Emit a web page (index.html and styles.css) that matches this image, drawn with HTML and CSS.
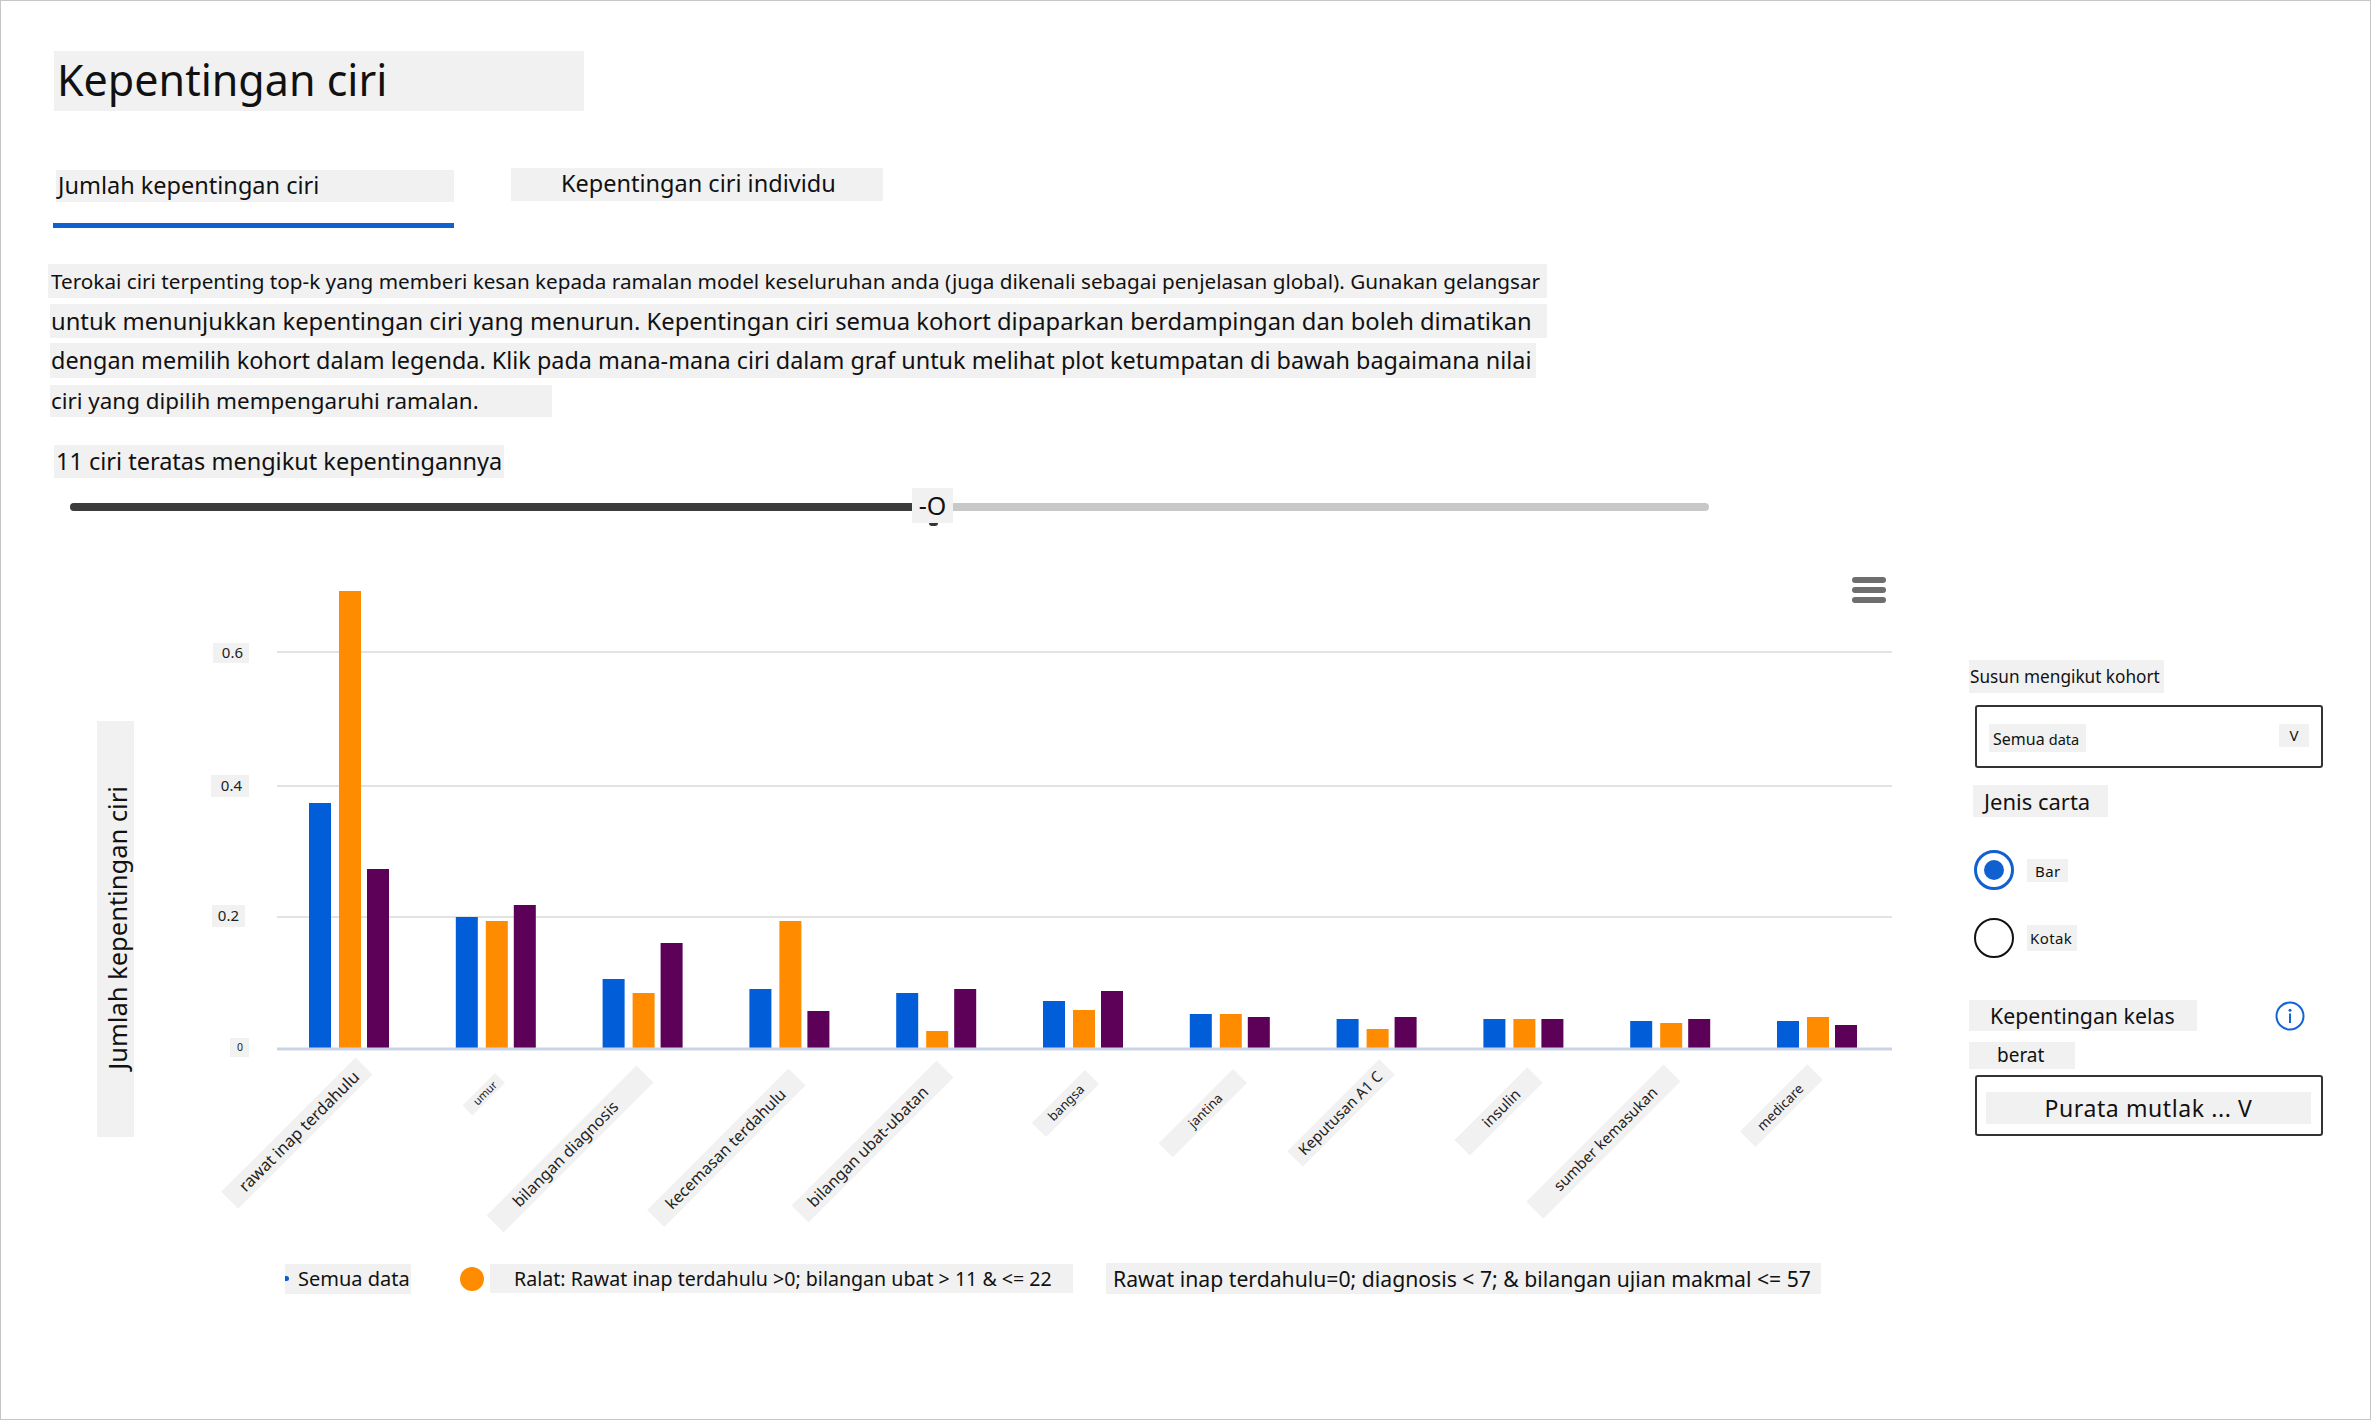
FILE: index.html
```html
<!DOCTYPE html>
<html lang="ms">
<head>
<meta charset="utf-8">
<title>Kepentingan ciri</title>
<link rel="stylesheet" href="styles.css">
</head>
<body>
<div class="page">
  <div class="title-box">Kepentingan ciri</div>

  <div class="tabs">
    <div class="tab tab-active">Jumlah kepentingan ciri</div>
    <div class="tab tab-other">Kepentingan ciri individu</div>
  </div>
  <div class="tab-underline"></div>

  <div class="desc">
    <span class="line line1">Terokai ciri terpenting top-k yang memberi kesan kepada ramalan model keseluruhan anda (juga dikenali sebagai penjelasan global). Gunakan gelangsar</span>
    <span class="line line2">untuk menunjukkan kepentingan ciri yang menurun. Kepentingan ciri semua kohort dipaparkan berdampingan dan boleh dimatikan</span>
    <span class="line line3">dengan memilih kohort dalam legenda. Klik pada mana-mana ciri dalam graf untuk melihat plot ketumpatan di bawah bagaimana nilai</span>
    <span class="line line4">ciri yang dipilih mempengaruhi ramalan.</span>
  </div>

  <div class="slider-label">11 ciri teratas mengikut kepentingannya</div>
  <div class="slider">
    <div class="slider-fill"></div>
    <div class="slider-thumb">-O</div>
    <span class="thumb-edge"></span>
  </div>

  <div class="chart-row">
    <div class="chart-col">
      <svg class="chart" width="1940" height="680" viewBox="1 560 1940 680" xmlns="http://www.w3.org/2000/svg">
        <!-- menu -->
        <rect x="1852" y="577" width="34" height="6" rx="3" fill="#6e6e6e"/>
        <rect x="1852" y="587" width="34" height="6" rx="3" fill="#6e6e6e"/>
        <rect x="1852" y="597" width="34" height="6" rx="3" fill="#6e6e6e"/>

        <!-- y title -->
        <rect x="97" y="721" width="37" height="416" fill="#f1f1f1"/>
        <text class="ytitle" transform="translate(117,928) rotate(-90)" text-anchor="middle" dominant-baseline="central">Jumlah kepentingan ciri</text>

        <!-- grid -->
        <line x1="277" y1="652" x2="1892" y2="652" stroke="#e3e3e3" stroke-width="2"/>
        <line x1="277" y1="786" x2="1892" y2="786" stroke="#e3e3e3" stroke-width="2"/>
        <line x1="277" y1="917" x2="1892" y2="917" stroke="#e3e3e3" stroke-width="2"/>

        <!-- ticks -->
        <rect x="213" y="643" width="36" height="20" fill="#f1f1f1"/>
        <text class="tick" x="243" y="658" text-anchor="end">0.6</text>
        <rect x="211" y="775" width="38" height="22" fill="#f1f1f1"/>
        <text class="tick" x="242" y="791" text-anchor="end">0.4</text>
        <rect x="212" y="905" width="33" height="22" fill="#f1f1f1"/>
        <text class="tick" x="239" y="921" text-anchor="end">0.2</text>
        <rect x="230" y="1038" width="19" height="19" fill="#f1f1f1"/>
        <text class="tick0" x="243" y="1051" text-anchor="end">0</text>

        <!-- bars -->
        <g>
          <rect x="309" y="803" width="22" height="245" fill="#015ed8"/>
          <rect x="339" y="591" width="22" height="457" fill="#ff8c00"/>
          <rect x="367" y="869" width="22" height="179" fill="#5c0058"/>

          <rect x="455.8" y="917" width="22" height="131" fill="#015ed8"/>
          <rect x="485.8" y="921" width="22" height="127" fill="#ff8c00"/>
          <rect x="513.8" y="905" width="22" height="143" fill="#5c0058"/>

          <rect x="602.6" y="979" width="22" height="69" fill="#015ed8"/>
          <rect x="632.6" y="993" width="22" height="55" fill="#ff8c00"/>
          <rect x="660.6" y="943" width="22" height="105" fill="#5c0058"/>

          <rect x="749.4" y="989" width="22" height="59" fill="#015ed8"/>
          <rect x="779.4" y="921" width="22" height="127" fill="#ff8c00"/>
          <rect x="807.4" y="1011" width="22" height="37" fill="#5c0058"/>

          <rect x="896.2" y="993" width="22" height="55" fill="#015ed8"/>
          <rect x="926.2" y="1031" width="22" height="17" fill="#ff8c00"/>
          <rect x="954.2" y="989" width="22" height="59" fill="#5c0058"/>

          <rect x="1043" y="1001" width="22" height="47" fill="#015ed8"/>
          <rect x="1073" y="1010" width="22" height="38" fill="#ff8c00"/>
          <rect x="1101" y="991" width="22" height="57" fill="#5c0058"/>

          <rect x="1189.8" y="1014" width="22" height="34" fill="#015ed8"/>
          <rect x="1219.8" y="1014" width="22" height="34" fill="#ff8c00"/>
          <rect x="1247.8" y="1017" width="22" height="31" fill="#5c0058"/>

          <rect x="1336.6" y="1019" width="22" height="29" fill="#015ed8"/>
          <rect x="1366.6" y="1029" width="22" height="19" fill="#ff8c00"/>
          <rect x="1394.6" y="1017" width="22" height="31" fill="#5c0058"/>

          <rect x="1483.4" y="1019" width="22" height="29" fill="#015ed8"/>
          <rect x="1513.4" y="1019" width="22" height="29" fill="#ff8c00"/>
          <rect x="1541.4" y="1019" width="22" height="29" fill="#5c0058"/>

          <rect x="1630.2" y="1021" width="22" height="27" fill="#015ed8"/>
          <rect x="1660.2" y="1023" width="22" height="25" fill="#ff8c00"/>
          <rect x="1688.2" y="1019" width="22" height="29" fill="#5c0058"/>

          <rect x="1777" y="1021" width="22" height="27" fill="#015ed8"/>
          <rect x="1807" y="1017" width="22" height="31" fill="#ff8c00"/>
          <rect x="1835" y="1025" width="22" height="23" fill="#5c0058"/>
        </g>

        <!-- baseline -->
        <line x1="277" y1="1049" x2="1892" y2="1049" stroke="#cbd4e5" stroke-width="3"/>

        <!-- x labels -->
        <g transform="translate(364,1066) rotate(-45)">
          <rect x="-190" y="-12" width="190" height="24" fill="#f1f1f1"/>
          <text class="xl" x="-11" y="6" font-size="16.5" text-anchor="end">rawat inap terdahulu</text>
        </g>
        <g transform="translate(500,1078) rotate(-45)">
          <rect x="-46" y="-7" width="46" height="14" fill="#f1f1f1"/>
          <text class="xl" x="-7" y="4" font-size="11" text-anchor="end">umur</text>
        </g>
        <g transform="translate(645,1074) rotate(-45)">
          <rect x="-212" y="-12" width="212" height="24" fill="#f1f1f1"/>
          <text class="xl" x="-42" y="6" font-size="16" text-anchor="end">bilangan diagnosis</text>
        </g>
        <g transform="translate(797,1077) rotate(-45)">
          <rect x="-200" y="-12" width="200" height="24" fill="#f1f1f1"/>
          <text class="xl" x="-20" y="6" font-size="16" text-anchor="end">kecemasan terdahulu</text>
        </g>
        <g transform="translate(945,1069) rotate(-45)">
          <rect x="-205" y="-12" width="205" height="24" fill="#f1f1f1"/>
          <text class="xl" x="-28" y="6" font-size="16" text-anchor="end">bilangan ubat-ubatan</text>
        </g>
        <g transform="translate(1092,1077) rotate(-45)">
          <rect x="-75" y="-10" width="75" height="20" fill="#f1f1f1"/>
          <text class="xl" x="-14" y="4.5" font-size="13" text-anchor="end">bangsa</text>
        </g>
        <g transform="translate(1240,1076) rotate(-45)">
          <rect x="-105" y="-10" width="105" height="20" fill="#f1f1f1"/>
          <text class="xl" x="-28" y="4.5" font-size="13" text-anchor="end">jantina</text>
        </g>
        <g transform="translate(1387,1067) rotate(-45)">
          <rect x="-130" y="-11" width="130" height="22" fill="#f1f1f1"/>
          <text class="xl" x="-10" y="5" font-size="15" text-anchor="end">Keputusan A1 C</text>
        </g>
        <g transform="translate(1535,1075) rotate(-45)">
          <rect x="-103" y="-11" width="103" height="22" fill="#f1f1f1"/>
          <text class="xl" x="-24" y="5" font-size="15" text-anchor="end">insulin</text>
        </g>
        <g transform="translate(1672,1073) rotate(-45)">
          <rect x="-194" y="-12" width="194" height="24" fill="#f1f1f1"/>
          <text class="xl" x="-24" y="5" font-size="15" text-anchor="end">sumber kemasukan</text>
        </g>
        <g transform="translate(1815,1072) rotate(-45)">
          <rect x="-95" y="-11" width="95" height="22" fill="#f1f1f1"/>
          <text class="xl" x="-20" y="5" font-size="13.5" text-anchor="end">medicare</text>
        </g>
      </svg>

      <div class="legend">
        <div class="legend-item item1"><span class="blue-sliver"></span>Semua data</div>
        <span class="orange-dot"></span>
        <div class="legend-item item2">Ralat: Rawat inap terdahulu &gt;0; bilangan ubat &gt; 11 &amp; &lt;= 22</div>
        <div class="legend-item item3">Rawat inap terdahulu=0; diagnosis &lt; 7; &amp; bilangan ujian makmal &lt;= 57</div>
      </div>
    </div>

    <div class="side">
      <div class="cohort-label">Susun mengikut kohort</div>
      <div class="dropdown dd1">
        <span class="dd-value">Semua <span class="small">data</span></span>
        <span class="dd-caret">V</span>
      </div>
      <div class="chart-type">Jenis carta</div>
      <div class="radio-row r-bar">
        <span class="radio radio-on"><span class="radio-dot"></span></span>
        <span class="radio-label">Bar</span>
      </div>
      <div class="radio-row r-kotak">
        <span class="radio"></span>
        <span class="radio-label">Kotak</span>
      </div>
      <div class="class-row">
        <div class="class-label">Kepentingan kelas</div>
        <svg class="info" width="30" height="30" viewBox="0 0 30 30" xmlns="http://www.w3.org/2000/svg">
          <circle cx="15" cy="15" r="13.5" fill="none" stroke="#1463d6" stroke-width="2"/>
          <circle cx="15" cy="9.2" r="1.5" fill="#1463d6"/>
          <rect x="14" y="12.5" width="2" height="9.5" fill="#1463d6"/>
        </svg>
      </div>
      <div class="weight-label">berat</div>
      <div class="dropdown dd2">
        <span class="dd2-inner">Purata mutlak ... V</span>
      </div>
    </div>
  </div>
</div>
</body>
</html>
```

FILE: styles.css
```css
html, body {
  margin: 0;
  padding: 0;
  background: #ffffff;
}

body {
  font-family: "Noto Sans", "Open Sans", sans-serif;
  color: #111111;
}

.page {
  width: 2371px;
  height: 1420px;
  box-sizing: border-box;
  border: 1px solid #c6c6c6;
  position: relative;
  overflow: hidden;
}

.title-box {
  margin: 50px 0 0 53px;
  width: 527px;
  height: 60px;
  padding-left: 3px;
  background: #f1f1f1;
  font-size: 43px;
  line-height: 58px;
}

.tabs {
  display: flex;
  margin: 57px 0 0 55px;
  align-items: flex-start;
}

.tab {
  background: #f1f1f1;
  font-size: 23.5px;
  height: 32px;
  line-height: 30px;
}

.tab-active {
  width: 396px;
  padding-left: 2px;
  margin-top: 2px;
}

.tab-other {
  margin-left: 57px;
  width: 322px;
  padding-left: 50px;
  height: 33px;
}

.tab-underline {
  margin: 21px 0 0 52px;
  width: 401px;
  height: 5px;
  background: #1060d0;
}

.desc {
  margin: 36px 0 0 47px;
}

.line {
  display: block;
  white-space: nowrap;
  background: #f1f1f1;
  box-sizing: border-box;
  padding-left: 3px;
  overflow: hidden;
}

.line1 {
  width: 1499px;
  height: 34px;
  line-height: 34px;
  font-size: 20.7px;
}

.line2 {
  margin-top: 6px;
  margin-left: 2px;
  width: 1497px;
  height: 34px;
  line-height: 34px;
  font-size: 23.75px;
  padding-left: 1px;
}

.line3 {
  margin-top: 5px;
  margin-left: 2px;
  width: 1486px;
  height: 35px;
  line-height: 35px;
  font-size: 23.4px;
  padding-left: 1px;
}

.line4 {
  margin-top: 7px;
  margin-left: 2px;
  width: 502px;
  height: 32px;
  line-height: 32px;
  font-size: 22.4px;
  padding-left: 1px;
}

.slider-label {
  margin: 28px 0 0 53px;
  width: 448px;
  height: 33px;
  padding-left: 2px;
  background: #f1f1f1;
  font-size: 23.5px;
  line-height: 33px;
  white-space: nowrap;
}

.slider {
  position: relative;
  margin: 25px 0 0 69px;
  width: 1639px;
  height: 8px;
  border-radius: 4px;
  background: #c8c8c8;
}

.slider-fill {
  width: 844px;
  height: 8px;
  border-radius: 4px 0 0 4px;
  background: #3b3b3b;
}

.slider-thumb {
  position: absolute;
  left: 842px;
  top: -15px;
  width: 41px;
  height: 35px;
  background: #f1f1f1;
  font-size: 25px;
  line-height: 35px;
  text-align: center;
}

.thumb-edge {
  position: absolute;
  left: 859px;
  top: 20px;
  width: 9px;
  height: 3px;
  border-radius: 0 0 5px 5px;
  background: #333333;
}

.chart-row {
  display: flex;
  margin-top: 49px;
}

.chart-col {
  display: flex;
  flex-direction: column;
  width: 1940px;
}

.chart {
  display: block;
  font-family: "Noto Sans", "Open Sans", sans-serif;
}

.ytitle {
  font-size: 25.5px;
  fill: #111111;
}

.tick {
  font-size: 15px;
  fill: #222222;
}

.tick0 {
  font-size: 10.5px;
  fill: #222222;
}

.xl {
  fill: #222222;
}

.legend {
  display: flex;
  align-items: center;
  margin-top: 23px;
  margin-left: 284px;
}

.legend-item {
  background: #f1f1f1;
  white-space: nowrap;
  box-sizing: border-box;
  display: flex;
  align-items: center;
}

.item1 {
  width: 126px;
  height: 30px;
  font-size: 20px;
  padding-left: 0;
}

.blue-sliver {
  width: 4px;
  height: 5px;
  background: #015ed8;
  margin-right: 9px;
  border-radius: 0 3px 3px 0;
}

.orange-dot {
  width: 24px;
  height: 24px;
  border-radius: 50%;
  background: #ff8c00;
  margin-left: 49px;
}

.item2 {
  margin-left: 6px;
  width: 583px;
  height: 29px;
  font-size: 19.6px;
  padding-left: 24px;
}

.item3 {
  margin-left: 33px;
  width: 715px;
  height: 31px;
  font-size: 21.2px;
  padding-left: 7px;
}

.side {
  margin-left: 28px;
  padding-top: 100px;
  display: flex;
  flex-direction: column;
  align-items: flex-start;
}

.cohort-label {
  width: 194px;
  height: 33px;
  padding-left: 1px;
  background: #f1f1f1;
  font-size: 17.2px;
  line-height: 33px;
  white-space: nowrap;
}

.dropdown {
  box-sizing: border-box;
  width: 348px;
  border: 2px solid #333333;
  border-radius: 3px;
  margin-left: 6px;
  display: flex;
  align-items: center;
}

.dd1 {
  margin-top: 12px;
  height: 63px;
  justify-content: space-between;
  padding: 0 12px;
}

.dd-value {
  background: #f1f1f1;
  width: 97px;
  height: 28px;
  line-height: 30px;
  font-size: 16px;
  padding-left: 4px;
  box-sizing: border-box;
  margin-top: 3px;
  white-space: nowrap;
}

.small {
  font-size: 14.5px;
}

.dd-caret {
  background: #f1f1f1;
  width: 30px;
  height: 23px;
  line-height: 23px;
  text-align: center;
  font-size: 15px;
  margin-top: -3px;
}

.chart-type {
  margin-top: 17px;
  margin-left: 4px;
  width: 124px;
  height: 32px;
  padding-left: 11px;
  background: #f1f1f1;
  font-size: 22px;
  line-height: 32px;
}

.radio-row {
  display: flex;
  align-items: center;
  margin-left: 5px;
}

.r-bar {
  margin-top: 33px;
}

.r-kotak {
  margin-top: 28px;
}

.radio {
  box-sizing: border-box;
  width: 40px;
  height: 40px;
  border-radius: 50%;
  border: 2.5px solid #111111;
  display: flex;
  align-items: center;
  justify-content: center;
}

.radio-on {
  border: 3px solid #1060d0;
}

.radio-dot {
  width: 20px;
  height: 20px;
  border-radius: 50%;
  background: #1060d0;
}

.radio-label {
  margin-left: 13px;
  background: #f1f1f1;
  height: 23px;
  line-height: 24px;
  font-size: 15px;
  padding: 0 7px 0 8px;
  letter-spacing: 0.4px;
}

.r-kotak .radio-label {
  padding: 0 5px 0 3px;
  height: 26px;
  line-height: 26px;
}

.class-row {
  margin-top: 42px;
  display: flex;
  align-items: center;
}

.class-label {
  width: 207px;
  height: 31px;
  padding-left: 21px;
  background: #f1f1f1;
  font-size: 21.3px;
  line-height: 31px;
  white-space: nowrap;
}

.info {
  display: block;
  margin-left: 78px;
}

.weight-label {
  margin-top: 11px;
  width: 78px;
  height: 27px;
  padding-left: 28px;
  background: #f1f1f1;
  font-size: 19px;
  line-height: 27px;
}

.dd2 {
  margin-top: 6px;
  height: 61px;
  padding: 0 10px 0 9px;
}

.dd2-inner {
  display: block;
  width: 100%;
  height: 32px;
  margin-top: 4px;
  background: #f1f1f1;
  text-align: center;
  font-size: 23px;
  line-height: 32px;
  letter-spacing: 0.6px;
  white-space: nowrap;
}
```
